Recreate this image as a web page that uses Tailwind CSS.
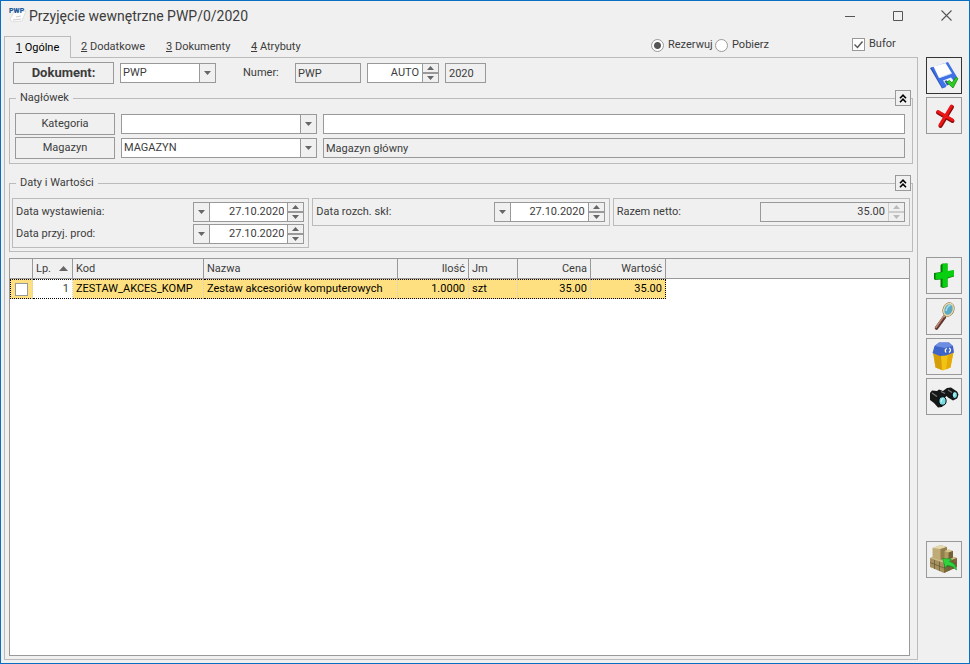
<!DOCTYPE html>
<html lang="pl">
<head>
    <meta charset="UTF-8">
    <meta name="viewport" content="width=device-width, initial-scale=1.0">
    <title>Przyjęcie wewnętrzne PWP/0/2020</title>
    <script src="https://cdn.jsdelivr.net/npm/@tailwindcss/browser@4"></script>
</head>
<body class="h-screen flex flex-col overflow-hidden border border-[#0a6fc2] bg-[#f0f0f0] pl-[3px] pb-[3px] font-['Roboto',sans-serif] text-[11px] leading-4 text-[#3c3c3c]">

    <!-- Shared glyphs -->
    <svg class="hidden">
        <symbol id="arrow-down" viewBox="0 0 7 4"><path d="M0 0h7L3.5 4z" fill="#666"/></symbol>
        <symbol id="arrow-up" viewBox="0 0 7 4"><path d="M0 4h7L3.5 0z" fill="#666"/></symbol>
        <symbol id="arrow-down-off" viewBox="0 0 7 4"><path d="M0 0h7L3.5 4z" fill="#bbb"/></symbol>
        <symbol id="arrow-up-off" viewBox="0 0 7 4"><path d="M0 4h7L3.5 0z" fill="#bbb"/></symbol>
        <symbol id="chevrons" viewBox="0 0 8 9"><path d="M1 4.2L4 1.2l3 3M1 8.2l3-3 3 3" fill="none" stroke="#000" stroke-width="1.6"/></symbol>
    </svg>

    <!-- Title bar -->
    <header class="h-[35px] shrink-0 flex items-start">
        <svg class="ml-1 mt-1 shrink-0" width="20" height="18" viewBox="0 0 20 18" aria-hidden="true">
            <path d="M6 7l12-1-4 10-10 1-2-3z" fill="#fdfdfd" stroke="#d5d5d5" stroke-width=".7"/>
            <path d="M5 15l8-1M8 12l5-1" stroke="#ccc"/>
            <text x="1" y="8" font-size="7" font-weight="900" fill="#1d5b9c">PWP</text>
        </svg>
        <h1 class="ml-px mt-1 text-[14px] leading-[22px]">Przyjęcie wewnętrzne PWP/0/2020</h1>
        <div class="ml-auto flex gap-[2px]">
            <button aria-label="Minimalizuj" class="w-[46px] h-[29px] flex items-center justify-center"><svg width="11" height="11" viewBox="0 0 11 11"><path d="M0 6.5h10" stroke="#555"/></svg></button>
            <button aria-label="Maksymalizuj" class="w-[46px] h-[29px] flex items-center justify-center"><svg width="10" height="10" viewBox="0 0 10 10"><path d="M.5.5h9v9h-9z" fill="none" stroke="#555"/></svg></button>
            <button aria-label="Zamknij" class="w-[46px] h-[29px] flex items-center justify-center"><svg width="11" height="11" viewBox="0 0 11 11"><path d="M.5.5l10 10M10.5.5l-10 10" stroke="#555" stroke-width="1.1"/></svg></button>
        </div>
    </header>

    <!-- Tabs and options -->
    <div class="h-[21px] shrink-0 flex items-start">
        <nav class="relative z-10 flex">
            <button class="w-[67px] h-[22px] border border-b-0 border-[#bbb] bg-[#f0f0f0] text-black"><u>1</u> Ogólne</button>
            <button class="h-[22px] pl-[10px] w-[85px] text-left"><u>2</u> Dodatkowe</button>
            <button class="h-[22px] pl-[10px] w-[85px] text-left"><u>3</u> Dokumenty</button>
            <button class="h-[22px] pl-[10px] w-[72px] text-left"><u>4</u> Atrybuty</button>
        </nav>
        <div class="ml-auto flex items-start">
            <label class="flex w-16 items-center gap-1 pt-px"><input type="radio" name="mode" checked class="appearance-none shrink-0 size-[13px] rounded-full border border-[#999] bg-white checked:bg-[radial-gradient(#555_3px,white_4px)]">Rezerwuj</label>
            <label class="flex w-[137px] items-center gap-1 pt-px"><input type="radio" name="mode" class="appearance-none shrink-0 size-[13px] rounded-full border border-[#999] bg-white">Pobierz</label>
            <label class="flex w-[117px] items-center gap-1">
                <span class="relative flex">
                    <input type="checkbox" checked class="appearance-none size-[13px] border border-[#999] bg-white">
                    <svg class="absolute inset-0 pointer-events-none" width="13" height="13" viewBox="0 0 13 13"><path d="M2.5 6.5l3 3 5-6" fill="none" stroke="#555" stroke-width="1.4"/></svg>
                </span>Bufor</label>
        </div>
    </div>

    <div class="grow min-h-0 flex gap-2 pr-[7px]">
        <main class="grow min-w-0 flex flex-col border border-[#bbb] px-1 pt-1 pb-[3px]">

            <!-- Document number -->
            <div class="flex items-center ml-1 mb-[6px]">
                <button class="w-[101px] h-[22px] border border-[#999] font-bold text-[13px]">Dokument:</button>
                <div class="ml-[6px] w-24 h-5 flex border border-[#999] bg-white">
                    <select aria-label="Dokument" class="appearance-none grow min-w-0 px-[2px]"><option>PWP</option></select>
                    <span class="w-4 shrink-0 flex items-center justify-center border-l border-[#999] bg-[#f0f0f0]"><svg width="7" height="4"><use href="#arrow-down"/></svg></span>
                </div>
                <label for="series" class="ml-[27px] w-[52px]">Numer:</label>
                <input id="series" readonly value="PWP" class="w-[66px] h-5 border border-[#999] px-[2px]">
                <div class="ml-[6px] w-[72px] h-5 flex border border-[#999] bg-white">
                    <input aria-label="Numer kolejny" value="AUTO" class="grow min-w-0 px-[3px] text-right">
                    <span class="w-4 shrink-0 grid grid-rows-2 border-l border-[#999] bg-[#f0f0f0]">
                        <button aria-label="Więcej" class="flex items-center justify-center border-b border-[#999]"><svg width="7" height="4"><use href="#arrow-up"/></svg></button>
                        <button aria-label="Mniej" class="flex items-center justify-center border-t border-[#999]"><svg width="7" height="4"><use href="#arrow-down"/></svg></button>
                    </span>
                </div>
                <input aria-label="Rok" readonly value="2020" class="ml-[6px] w-[41px] h-5 border border-[#999] px-[3px]">
            </div>

            <!-- Header data -->
            <section class="relative mb-[11px]">
                <fieldset class="border border-[#bbb]">
                    <legend class="ml-[6px] px-1">Nagłówek</legend>
                    <div class="pt-[7px] pb-1 pl-[5px] pr-[7px] grid grid-cols-[100px_196px_1fr] gap-x-[6px] gap-y-[2px] items-center">
                        <button class="h-[22px] border border-[#999]">Kategoria</button>
                        <div class="h-5 flex border border-[#999] bg-white">
                            <select aria-label="Kategoria" class="appearance-none grow min-w-0 px-[2px]"><option></option></select>
                            <span class="w-4 shrink-0 flex items-center justify-center border-l border-[#999] bg-[#f0f0f0]"><svg width="7" height="4"><use href="#arrow-down"/></svg></span>
                        </div>
                        <input aria-label="Opis kategorii" class="min-w-0 h-5 border border-[#999] bg-white px-[2px]">
                        <button class="h-[22px] border border-[#999]">Magazyn</button>
                        <div class="h-5 flex border border-[#999] bg-white">
                            <select aria-label="Magazyn" class="appearance-none grow min-w-0 px-[2px]"><option>MAGAZYN</option></select>
                            <span class="w-4 shrink-0 flex items-center justify-center border-l border-[#999] bg-[#f0f0f0]"><svg width="7" height="4"><use href="#arrow-down"/></svg></span>
                        </div>
                        <input aria-label="Nazwa magazynu" readonly value="Magazyn główny" class="min-w-0 h-5 border border-[#999] px-[2px]">
                    </div>
                </fieldset>
                <button aria-label="Zwiń nagłówek" class="absolute top-0 right-[2px] size-4 flex items-center justify-center border border-[#999] bg-[#f0f0f0]"><svg width="8" height="9"><use href="#chevrons"/></svg></button>
            </section>

            <!-- Dates and values -->
            <section class="relative mb-[6px]">
                <fieldset class="border border-[#bbb]">
                    <legend class="ml-[6px] px-1">Daty i Wartości</legend>
                    <div class="pt-[7px] pb-[3px] pl-[2px] pr-[2px] grid grid-cols-3 gap-[3px] items-start">
                        <div class="flex flex-col gap-[2px] border border-[#bbb] p-[3px] pr-1">
                            <div class="flex items-center justify-between">
                                <label for="date-issue">Data wystawienia:</label>
                                <div class="w-[111px] h-5 flex border border-[#999] bg-white">
                                    <button aria-label="Kalendarz" class="w-4 shrink-0 flex items-center justify-center border-r border-[#999] bg-[#f0f0f0]"><svg width="7" height="4"><use href="#arrow-down"/></svg></button>
                                    <input id="date-issue" value="27.10.2020" class="grow min-w-0 px-[3px] text-right">
                                    <span class="w-4 shrink-0 grid grid-rows-2 border-l border-[#999] bg-[#f0f0f0]">
                                        <button aria-label="Więcej" class="flex items-center justify-center border-b border-[#999]"><svg width="7" height="4"><use href="#arrow-up"/></svg></button>
                                        <button aria-label="Mniej" class="flex items-center justify-center border-t border-[#999]"><svg width="7" height="4"><use href="#arrow-down"/></svg></button>
                                    </span>
                                </div>
                            </div>
                            <div class="flex items-center justify-between">
                                <label for="date-receipt">Data przyj. prod:</label>
                                <div class="w-[111px] h-5 flex border border-[#999] bg-white">
                                    <button aria-label="Kalendarz" class="w-4 shrink-0 flex items-center justify-center border-r border-[#999] bg-[#f0f0f0]"><svg width="7" height="4"><use href="#arrow-down"/></svg></button>
                                    <input id="date-receipt" value="27.10.2020" class="grow min-w-0 px-[3px] text-right">
                                    <span class="w-4 shrink-0 grid grid-rows-2 border-l border-[#999] bg-[#f0f0f0]">
                                        <button aria-label="Więcej" class="flex items-center justify-center border-b border-[#999]"><svg width="7" height="4"><use href="#arrow-up"/></svg></button>
                                        <button aria-label="Mniej" class="flex items-center justify-center border-t border-[#999]"><svg width="7" height="4"><use href="#arrow-down"/></svg></button>
                                    </span>
                                </div>
                            </div>
                        </div>
                        <div class="flex items-center justify-between border border-[#bbb] p-[3px] pr-1">
                            <label for="date-release">Data rozch. skł:</label>
                            <div class="w-[111px] h-5 flex border border-[#999] bg-white">
                                <button aria-label="Kalendarz" class="w-4 shrink-0 flex items-center justify-center border-r border-[#999] bg-[#f0f0f0]"><svg width="7" height="4"><use href="#arrow-down"/></svg></button>
                                <input id="date-release" value="27.10.2020" class="grow min-w-0 px-[3px] text-right">
                                <span class="w-4 shrink-0 grid grid-rows-2 border-l border-[#999] bg-[#f0f0f0]">
                                    <button aria-label="Więcej" class="flex items-center justify-center border-b border-[#999]"><svg width="7" height="4"><use href="#arrow-up"/></svg></button>
                                    <button aria-label="Mniej" class="flex items-center justify-center border-t border-[#999]"><svg width="7" height="4"><use href="#arrow-down"/></svg></button>
                                </span>
                            </div>
                        </div>
                        <div class="flex items-center justify-between border border-[#bbb] p-[3px] pr-1">
                            <label for="net-total">Razem netto:</label>
                            <div class="w-[145px] h-5 flex border border-[#999]">
                                <input id="net-total" readonly value="35.00" class="grow min-w-0 px-[3px] text-right">
                                <span class="w-4 shrink-0 grid grid-rows-2 border-l border-[#ccc]">
                                    <button disabled aria-label="Więcej" class="flex items-center justify-center border-b border-[#ccc]"><svg width="7" height="4"><use href="#arrow-up-off"/></svg></button>
                                    <button disabled aria-label="Mniej" class="flex items-center justify-center border-t border-[#ccc]"><svg width="7" height="4"><use href="#arrow-down-off"/></svg></button>
                                </span>
                            </div>
                        </div>
                    </div>
                </fieldset>
                <button aria-label="Zwiń daty i wartości" class="absolute top-0 right-[2px] size-4 flex items-center justify-center border border-[#999] bg-[#f0f0f0]"><svg width="8" height="9"><use href="#chevrons"/></svg></button>
            </section>

            <!-- Items -->
            <div class="grow min-h-0 mr-[3px] border border-[#999] bg-white">
                <table class="w-full table-fixed border-separate border-spacing-0">
                    <colgroup>
                        <col class="w-[23px]"><col class="w-10"><col class="w-[131px]"><col class="w-[194px]"><col class="w-[71px]"><col class="w-[49px]"><col class="w-[73px]"><col class="w-[75px]"><col>
                    </colgroup>
                    <thead>
                        <tr class="h-5 bg-[#f0f0f0] text-left *:border-b *:border-[#999] *:px-[3px] *:py-0 *:font-normal">
                            <th class="border-r" aria-label="Zaznacz"></th>
                            <th class="border-r"><span class="flex items-center justify-between">Lp.<svg class="mr-px" width="9" height="5" viewBox="0 0 9 5"><path d="M0 5h9L4.5 0z" fill="#666"/></svg></span></th>
                            <th class="border-r">Kod</th>
                            <th class="border-r">Nazwa</th>
                            <th class="border-r text-right">Ilość</th>
                            <th class="border-r">Jm</th>
                            <th class="border-r text-right">Cena</th>
                            <th class="border-r text-right">Wartość</th>
                            <th></th>
                        </tr>
                    </thead>
                    <tbody>
                        <tr class="h-5 text-black *:px-[3px] *:py-0">
                            <td class="bg-[#ffe080] border border-dotted border-black border-r-[#d0d0d0]"><input type="checkbox" aria-label="Zaznacz pozycję" class="block mx-auto appearance-none size-[13px] border border-[#999] bg-white"></td>
                            <td class="border-y border-r border-dotted border-black border-r-[#d0d0d0] text-right text-[#3c3c3c]">1</td>
                            <td class="bg-[#ffe080] border-y border-r border-dotted border-black border-r-[#d0d0d0]">ZESTAW_AKCES_KOMP</td>
                            <td class="bg-[#ffe080] border-y border-r border-dotted border-black border-r-[#d0d0d0] whitespace-nowrap">Zestaw akcesoriów komputerowych</td>
                            <td class="bg-[#ffe080] border-y border-r border-dotted border-black border-r-[#d0d0d0] text-right">1.0000</td>
                            <td class="bg-[#ffe080] border-y border-r border-dotted border-black border-r-[#d0d0d0]">szt</td>
                            <td class="bg-[#ffe080] border-y border-r border-dotted border-black border-r-[#d0d0d0] text-right">35.00</td>
                            <td class="bg-[#ffe080] border-y border-r border-dotted border-black text-right">35.00</td>
                            <td></td>
                        </tr>
                    </tbody>
                </table>
            </div>
        </main>

        <!-- Actions -->
        <aside class="w-9 shrink-0 flex flex-col gap-[3px]">
            <button aria-label="Zapisz" class="h-[37px] flex items-center justify-center border border-[#333]">
                <svg width="32" height="32" viewBox="0 0 32 32">
                    <path d="M2 8l2.500-1L18 27l-4 1.500z" fill="#2f55b8"/>
                    <path d="M3.500 7.500L20 2l9 15-1.500 5-13 6z" fill="#3f72e6"/>
                    <path d="M5.500 6.500L17.500 3l6.500 10.500-13 4.500z" fill="#fff"/>
                    <path d="M12 17.500l11-4" stroke="#d5dcf0"/>
                    <path d="M15 20.500l8-3 4.500 5.500-8 4z" fill="#f4f6fb"/>
                    <path d="M16.500 21l2-.8 2.500 4.500-2 .8z" fill="#2f55b8"/>
                    <path d="M18.500 22l3-1.500 2.500 2.500 4-6 2 1.500-5 9.500z" fill="#2ccc22" stroke="#148a12" stroke-width=".8"/>
                </svg>
            </button>
            <button aria-label="Anuluj" class="h-[37px] flex items-center justify-center border border-[#999]">
                <svg width="32" height="32" viewBox="0 0 32 32">
                    <g fill="none" stroke-linecap="round">
                        <path d="M10 12.500l14.500 8.500M24 7L12.500 26" stroke="#8d0d0d" stroke-width="4"/>
                        <path d="M10 11.500l14.500 8.500M23.500 6L12 25" stroke="#ee1515" stroke-width="3"/>
                    </g>
                </svg>
            </button>
            <button aria-label="Dodaj" class="mt-[120px] h-[37px] flex items-center justify-center border border-[#999]">
                <svg width="32" height="32" viewBox="0 0 32 32">
                    <path d="M12.500 5l2-1.500 5 .5v7.500l6.500-1v6l-6.500 2v8.500L15 28l-2.500-1v-7.500L7 20l-1-1v-6l6.500-1z" fill="#087808"/>
                    <path d="M14.500 4l5-1v8l6.500-1v6l-6.500 1.500v9l-5 1v-9l-7 1v-6l7-1.500z" fill="#08cf10"/>
                </svg>
            </button>
            <button aria-label="Szczegóły" class="mt-px h-[37px] flex items-center justify-center border border-[#999]">
                <svg width="32" height="32" viewBox="0 0 32 32">
                    <path d="M8.500 27l8-11" stroke="#5b342b" stroke-width="3.600" stroke-linecap="round"/>
                    <path d="M8 26.500l7.500-11" stroke="#bd8472" stroke-width="1.600" stroke-linecap="round"/>
                    <path d="M16 16l3-4" stroke="#b9a679" stroke-width="2"/>
                    <ellipse cx="20.500" cy="8.500" rx="4.600" ry="6.200" transform="rotate(22 20.500 8.500)" fill="#5ba9c4" stroke="#776848" stroke-width="2.400"/>
                    <ellipse cx="20.500" cy="8.500" rx="4.600" ry="6.200" transform="rotate(22 20.500 8.500)" fill="#5ba9c4" stroke="#ead9a5" stroke-width="1.400"/>
                    <path d="M18 10q1-5 4.500-6" fill="none" stroke="#a5dcea" stroke-width="1.500"/>
                </svg>
            </button>
            <button aria-label="Usuń" class="h-[37px] flex items-center justify-center border border-[#999]">
                <svg width="32" height="32" viewBox="0 0 32 32">
                    <path d="M5 11h20.500L22.500 26.500 15 29.500l-7.500-3z" fill="#f2c313"/>
                    <path d="M5 11l8 3 1 15-6.500-2.500z" fill="#d69d0b"/>
                    <path d="M20 13l5.500-2-3 15.500-4.500 2z" fill="#e4aa08"/>
                    <path d="M4.500 12l2-7L11 1.500h10L25 5l1 6.500-8 3-6 .5z" fill="#3e64c8"/>
                    <path d="M7 5l4-3.500h10L24.500 5 17 7z" fill="#6c8de2"/>
                    <path d="M18 11.500q-2-3 1-4M21 7q3 1.500 0 4.500" fill="none" stroke="#fff" stroke-width="1.300"/>
                </svg>
            </button>
            <button aria-label="Szukaj" class="h-[37px] flex items-center justify-center border border-[#999]">
                <svg width="32" height="32" viewBox="0 0 32 32">
                    <path d="M2 12l2-2.500 5 .500 2-1.500 4 1.500 4-3 4-.500 6 4 1.500 3-1.500 4-4 2-5-3-1.500-1.500-2 2 1 5-3.500 4-4 .500-4-4.500-4-3z" fill="#151717"/>
                    <path d="M4 12l5 3.500M13 10.500l4 2M20 9l4 2.500" stroke="#777" stroke-width="1.200"/>
                    <ellipse cx="14.500" cy="20" rx="3.600" ry="4.200" fill="#78dbe2" stroke="#050606"/>
                    <path d="M13 21q0-3 2.500-4" fill="none" stroke="#d8fbfb"/>
                    <ellipse cx="26.800" cy="14" rx="2.700" ry="3.500" fill="#78dbe2" stroke="#050606"/>
                    <path d="M26 15q0-2 1.500-3" fill="none" stroke="#d8fbfb"/>
                </svg>
            </button>
            <button aria-label="Magazyn" class="mt-[123px] h-[37px] flex items-center justify-center border border-[#999]">
                <svg width="32" height="32" viewBox="0 0 32 32">
                    <path d="M2 14l13-4 14 4v9l-13 6-14-6z" fill="#a3905e"/>
                    <path d="M2 14l13-4 14 4-13 5z" fill="#cdbc8a"/>
                    <path d="M16 19l13-5v9l-13 6z" fill="#7a673c"/>
                    <path d="M2 18.500l14 5.500 13-5.500M6.500 16v9M11.500 17.500v9.500M21 17.500v9M25 16v9" fill="none" stroke="#5e4e2a" stroke-width=".6"/>
                    <path d="M4.500 4l8-3 6.500 2v10.500L12 16l-7.500-2z" fill="#bfab76"/>
                    <path d="M4.500 4l8-3L19 3l-6.500 2z" fill="#e4d8ae"/>
                    <path d="M12.500 5L19 3v10.500L12.500 16z" fill="#927e4b"/>
                    <path d="M16.500 7l4-1.500 4.500 1.500v6.500l-4.500 2-4-1.500z" fill="#b09b64"/>
                    <path d="M16.500 7l4-1.500L25 7l-4.500 1.500z" fill="#d9c994"/>
                    <path d="M20.500 8.500L25 7v6.500l-4.500 2z" fill="#746237"/>
                    <path d="M14.500 14.500l9 .5-2 2.500q6.500 1.500 7 8.500-4-4.500-9.500-4.500l-1.500 3z" fill="#2fd33d" stroke="#13861c" stroke-width=".6"/>
                </svg>
            </button>
        </aside>
    </div>

</body>
</html>
